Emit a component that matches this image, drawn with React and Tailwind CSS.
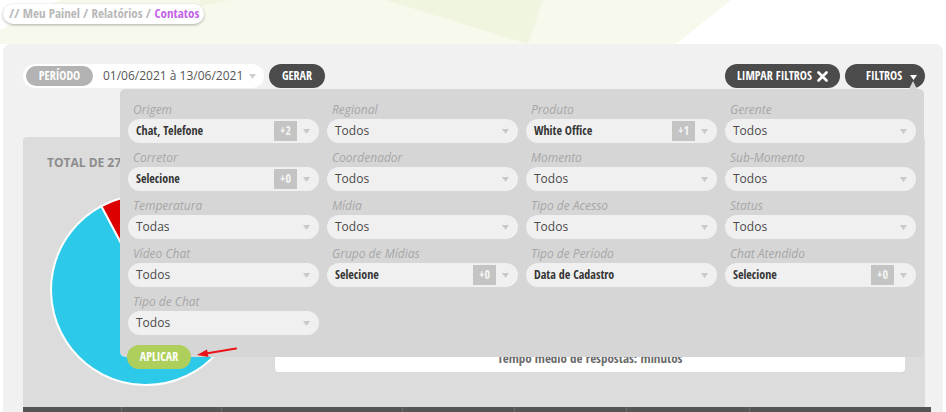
import React from "react";

const COND = "font-['Liberation_Sans_Narrow','Open_Sans_Condensed','DejaVu_Sans_Condensed',sans-serif] font-bold";

const rows = [
  [
    { l: "Origem", v: "Chat, Telefone", b: "+2", bold: true },
    { l: "Regional", v: "Todos" },
    { l: "Produto", v: "White Office", b: "+1", bold: true },
    { l: "Gerente", v: "Todos" },
  ],
  [
    { l: "Corretor", v: "Selecione", b: "+0", bold: true },
    { l: "Coordenador", v: "Todos" },
    { l: "Momento", v: "Todos" },
    { l: "Sub-Momento", v: "Todos" },
  ],
  [
    { l: "Temperatura", v: "Todas" },
    { l: "Mídia", v: "Todos" },
    { l: "Tipo de Acesso", v: "Todos" },
    { l: "Status", v: "Todos" },
  ],
  [
    { l: "Vídeo Chat", v: "Todos" },
    { l: "Grupo de Mídias", v: "Selecione", b: "+0", bold: true },
    { l: "Tipo de Período", v: "Data de Cadastro", bold: true },
    { l: "Chat Atendido", v: "Selecione", b: "+0", bold: true },
  ],
  [{ l: "Tipo de Chat", v: "Todos" }],
];

function Caret({ color = "#c9c9c9" }) {
  return (
    <svg width="7" height="5" viewBox="0 0 7 5" className="shrink-0">
      <path d="M0 0 L7 0 L3.5 5 Z" fill={color} />
    </svg>
  );
}

function Field({ f }) {
  return (
    <div className="flex flex-col">
      <div className="h-6 pt-[6px] pl-[5px] text-[12px] leading-[18px] italic text-[#a6a6a6] whitespace-nowrap">{f.l}</div>
      <div className="h-6 rounded-full bg-[#f0f0f0] flex items-center pl-2 pr-[9px]">
        <span
          className={
            f.bold
              ? `${COND} flex-1 text-[12px] text-[#363636] whitespace-nowrap`
              : "flex-1 text-[12px] text-[#4a4a4a] whitespace-nowrap"
          }
        >
          {f.v}
        </span>
        {f.b && (
          <span className={`${COND} w-[23px] h-5 mr-[6px] bg-[#c4c4c4] text-[#f4f4f4] text-[12px] flex items-center justify-center`}>
            {f.b}
          </span>
        )}
        <Caret />
      </div>
    </div>
  );
}

export default function App() {
  return (
    <div className="relative w-[946px] h-[412px] overflow-hidden bg-white font-['Open_Sans',sans-serif]">
      {/* background shapes */}
      <svg className="absolute top-0 left-0" width="946" height="60" viewBox="0 0 946 60">
        <polygon points="0,30 60,0 731,0 676,44 0,44" fill="#f7f9ec" />
        <polygon points="386,0 543,0 528,44" fill="#eff5de" />
        <polygon points="200,0 230,0 200,6" fill="#eff5de" />
      </svg>

      {/* breadcrumb */}
      <div className="relative flex pt-1 pl-[3px] h-6">
        <div className={`${COND} flex items-center h-5 w-[201px] pl-[6px] rounded-full bg-white shadow-[0_1px_3px_rgba(0,0,0,0.3)] text-[13px] whitespace-nowrap`}>
          <span className="text-[#b8b8b8]">// Meu Painel / Relatórios /&nbsp;</span>
          <span className="text-[#c462e6]">Contatos</span>
        </div>
      </div>

      {/* main panel */}
      <div className="relative mt-5 ml-[3px] w-[940px] h-[368px] bg-[#f1f1f1] rounded-t-lg pt-5 pl-5 pr-[18px]">
        <div className="flex justify-between h-6">
          <div className="flex items-center">
            <div className="flex items-center w-[241px] h-6 rounded-full bg-white pl-[3px] pr-2">
              <span className={`${COND} w-[67px] h-5 rounded-full bg-[#b3b3b3] text-white text-[12px] flex items-center justify-center`}>
                PERÍODO
              </span>
              <span className="ml-[10px] text-[12px] text-[#555] flex-1 whitespace-nowrap">01/06/2021 à 13/06/2021</span>
              <Caret color="#cfcfcf" />
            </div>
            <button className={`${COND} ml-[5px] w-[56px] h-6 rounded-full bg-[#4b4b4b] text-white text-[12px]`}>GERAR</button>
          </div>
          <div className="flex items-center gap-[5px]">
            <button className={`${COND} w-[115px] h-6 rounded-full bg-[#4b4b4b] text-white text-[12px] flex items-center justify-center gap-[5px]`}>
              LIMPAR FILTROS
              <svg width="11" height="11" viewBox="0 0 11 11">
                <path d="M1.5 1.5 L9.5 9.5 M9.5 1.5 L1.5 9.5" stroke="white" strokeWidth="2.6" strokeLinecap="round" />
              </svg>
            </button>
            <button className={`${COND} w-[80px] h-6 rounded-full bg-[#4b4b4b] text-white text-[12px] flex items-center pl-[21px]`}>
              FILTROS
              <span className="ml-[8px] mt-[3px]">
                <Caret color="#ffffff" />
              </span>
            </button>
          </div>
        </div>

        {/* card */}
        <div className="mt-[49px] w-full h-[270px] bg-[#dcdcdc] rounded-t flex">
          <div className="w-[252px] pl-6 pt-[18px]">
            <div className="text-[12px] leading-4 font-bold text-[#8c8c8c] whitespace-nowrap">TOTAL DE 27</div>
            <svg width="196" height="196" viewBox="0 0 196 196" className="mt-[21px] ml-[1px]">
              <path d="M98 98 L145.5 15.7 A95 95 0 1 1 53.4 14.1 Z" fill="#2dc9e9" stroke="#fff" strokeWidth="2" strokeLinejoin="round" />
              <path d="M98 98 L53.4 14.1 A95 95 0 0 1 145.5 15.7 Z" fill="#dd0000" stroke="#fff" strokeWidth="2" strokeLinejoin="round" />
            </svg>
          </div>
          <div className="flex-1 pr-5 pt-[175px]">
            <div className="h-[60px] bg-white rounded-b flex items-end justify-center pb-[6px]">
              <span className={`${COND} text-[13px] leading-4 text-[#6a6a6a]`}>Tempo médio de respostas: minutos</span>
            </div>
          </div>
        </div>

        {/* dark table header */}
        <div className="w-[908px] h-[6px] bg-[#555] flex">
          <div className="w-[99px] border-r border-[#6d6d6d]" />
          <div className="w-[100px] border-r border-[#6d6d6d]" />
          <div className="w-[181px] border-r border-[#6d6d6d]" />
          <div className="w-[112px] border-r border-[#6d6d6d]" />
          <div className="w-[112px] border-r border-[#6d6d6d]" />
          <div className="w-[123px] border-r border-[#6d6d6d]" />
        </div>
      </div>

      {/* filter dropdown */}
      <div className="absolute left-[120px] top-[89px] w-[804px] h-[268px] bg-[#d6d6d6] rounded-[5px] pt-[6px] px-2">
        <svg className="absolute right-[7px] -top-[8px]" width="8" height="8" viewBox="0 0 8 8">
          <path d="M0 8 L4 0 L8 8 Z" fill="#d6d6d6" />
        </svg>
        <div className="flex flex-col">
          {rows.map((r, i) => (
            <div key={i} className="grid grid-cols-4 gap-x-2">
              {r.map((f) => (
                <Field key={f.l} f={f} />
              ))}
            </div>
          ))}
        </div>
        <button className={`${COND} mt-[10px] -ml-px w-[64px] h-6 rounded-full bg-[#afcf5d] text-white text-[12px]`}>APLICAR</button>
      </div>

      {/* red annotation arrow */}
      <svg className="absolute left-[194px] top-[344px]" width="46" height="16" viewBox="0 0 46 16">
        <path d="M42 4.5 L12 9.5" stroke="#e8141a" strokeWidth="2.2" strokeLinecap="round" />
        <path d="M3 11 L13 5.5 L14.5 13 Z" fill="#e8141a" />
      </svg>
    </div>
  );
}
